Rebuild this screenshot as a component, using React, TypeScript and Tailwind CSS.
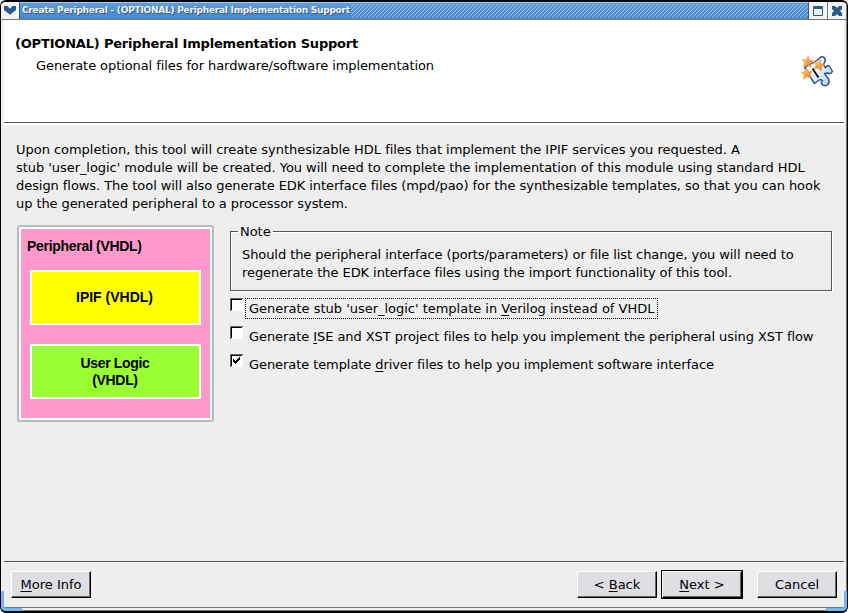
import React from "react";

function Line({ children, className = "" }: { children: React.ReactNode; className?: string }) {
  return <div className={"whitespace-nowrap leading-[18px] " + className}>{children}</div>;
}

function Key({ children }: { children: React.ReactNode }) {
  return <span className="underline decoration-1 underline-offset-2">{children}</span>;
}

function Button({ children, primary = false, className = "" }: { children: React.ReactNode; primary?: boolean; className?: string }) {
  return (
    <div className={primary ? "border border-black " + className : className}>
      <button className="block h-[27px] w-[80px] border-t border-r border-b border-l border-t-white border-r-black border-b-black border-l-white bg-[#dedee3] p-0 text-center leading-[25px] shadow-[inset_-1px_-1px_0_#666]">
        {children}
      </button>
    </div>
  );
}

function Check({ checked = false, focused = false, children, className }: { checked?: boolean; focused?: boolean; children: React.ReactNode; className: string }) {
  return (
    <label className="flex h-[28px] items-start">
      <span className="h-[13px] w-[13px] shrink-0 border-t border-l border-[#666] bg-white">
        <span className="block h-[11px] w-[11px] border-t border-l border-black">
          {checked && (
            <svg className="block" width="9" height="9" viewBox="0 0 9 9" shapeRendering="crispEdges">
              <path d="M1 3h1v3h-1zM2 4h1v3h-1zM3 5h1v3h-1zM4 4h1v3h-1zM5 3h1v3h-1zM6 2h1v3h-1zM7 1h1v3h-1z" fill="#000" />
            </svg>
          )}
        </span>
      </span>
      <span className={"ml-[2px] h-[21px] border border-dotted pl-[3px] leading-[20px] whitespace-nowrap " + (focused ? "border-black " : "border-transparent ") + className}>{children}</span>
    </label>
  );
}

const star = "M0-5.8 1.7-2 5.8-1.7 2.8 1.2 3.8 5.4 0 3.2-3.8 5.4-2.8 1.2-5.8-1.7-1.7-2z";

function WizardIcon() {
  return (
    <svg width="34" height="34" viewBox="0 0 34 34">
      <defs>
        <linearGradient id="piece" x1="0" y1="0" x2="1" y2="1">
          <stop stopColor="#fff" />
          <stop offset=".4" stopColor="#f0f6fb" />
          <stop offset="1" stopColor="#a8d4ea" />
        </linearGradient>
        <linearGradient id="gold" x1="0" y1="0" x2="1" y2="1">
          <stop stopColor="#ffd590" />
          <stop offset=".5" stopColor="#fba544" />
          <stop offset="1" stopColor="#dd661b" />
        </linearGradient>
      </defs>
      <path d="M4.500 13.500 17 6.500 19 4.500Q22 1.500 24 3.500Q26.500 6 24.500 8.500L23.500 10.500 25.500 14Q26 12 29 11.500L32.500 17.500Q31 20.500 27.500 19L24.500 19.500 28.500 25Q30 27.500 28 30.500Q24.500 33 22 30.500Q20.500 29 22.500 26.500Q20.500 25 18.500 26.500L14.500 29.500 8.500 20.500z" fill="url(#piece)" stroke="#2e4ba5" strokeWidth="1.4" strokeLinejoin="round" />
      <path d="m12.500 14.500 6 9" stroke="#000" strokeWidth="1.7" />
      <g fill="url(#gold)" stroke="#ef933d" strokeWidth=".4">
        <path d={star} transform="translate(7.500 7.800) rotate(6)" />
        <path d={star} transform="translate(19 11) rotate(14)" />
        <path d={star} transform="translate(6.800 19.500) rotate(-4)" />
      </g>
    </svg>
  );
}

export default function App() {
  return (
    <div className="relative flex h-[613px] w-[848px] flex-col overflow-hidden rounded-[6px] border-t-2 border-r border-b-2 border-l border-black bg-[#eee] font-['DejaVu_Sans',sans-serif] text-[13px] text-black shadow-[inset_-1px_0_0_#777]">
      <header className="mr-[1px] flex h-[18px] shrink-0 border-b border-[#777]">
        <div className="flex w-[18px] shrink-0 items-center justify-center bg-[#f3f3f3]">
          <svg className="block shrink-0" width="12" height="9" viewBox="0 0 12 9"><path d="M0 0H3.500L6 2.800 8.500 0H12V4L6 8.800 0 4z" fill="#285890" /></svg>
        </div>
        <div className="flex min-w-0 flex-1 border-t border-r border-l border-t-[#9acbff] border-r-[#315b8d] border-l-[#315b8d] bg-linear-to-b from-[#639bd5] to-[#4387d0]">
          <div className="w-[331px] shrink-0 pl-[2px] text-[9px] font-bold leading-[15px] tracking-[-0.235px] whitespace-nowrap text-[#f2f2f2] [text-shadow:1px_1px_0_#315b8d]">Create Peripheral - (OPTIONAL) Peripheral Implementation Support</div>
          <svg className="block h-[16px] min-w-0 flex-1">
            <defs>
              <pattern id="hatch" width="4" height="4" patternUnits="userSpaceOnUse">
                <path d="M-1 5 5-1M-1 1 1-1M3 5 5 3" stroke="#b4d0ee" strokeWidth=".8" />
              </pattern>
            </defs>
            <rect width="100%" height="14" y="1" fill="url(#hatch)" />
          </svg>
        </div>
        <div className="flex w-[18px] items-center justify-center bg-[#f3f3f3]">
          <svg className="block" width="10" height="10" viewBox="0 0 10 10"><rect width="10" height="10" rx="1" fill="#285890" /><path d="M1 3h8v6H1z" fill="#eee" /></svg>
        </div>
        <div className="flex w-[19px] items-center justify-center border-l border-[#777] bg-[#f3f3f3]">
          <svg className="block shrink-0" width="12" height="12" viewBox="0 0 12 12"><path d="M1 1h3l2 2 2-2h3v3L9 6l2 2v3H8L6 9l-2 2H1V8l2-2-2-2z" fill="#285890" /></svg>
        </div>
      </header>

      <section className="ml-[3px] mr-[3px] flex h-[103px] shrink-0 justify-between border-b border-[#555] bg-white pt-[15px] pl-[11px]">
        <div>
          <Line className="font-bold tracking-[-0.19px]">(OPTIONAL) Peripheral Implementation Support</Line>
          <Line className="mt-[4px] pl-[21px] tracking-[-0.083px]">Generate optional files for hardware/software implementation</Line>
        </div>
        <div className="mt-[19px] mr-[10px]"><WizardIcon /></div>
      </section>

      <main className="mx-[3px] h-[438px] shrink-0 border-t-2 border-white px-[12px] pt-[16px]">
        <Line className="tracking-[-0.03px]">Upon completion, this tool will create synthesizable HDL files that implement the IPIF services you requested. A</Line>
        <Line className="tracking-[-0.05px]">stub 'user_logic' module will be created. You will need to complete the implementation of this module using standard HDL</Line>
        <Line className="tracking-[-0.06px]">design flows. The tool will also generate EDK interface files (mpd/pao) for the synthesizable templates, so that you can hook</Line>
        <Line className="tracking-[-0.08px]">up the generated peripheral to a processor system.</Line>
        <div className="mt-[12px] flex">
          <div className="ml-[1px] h-[197px] w-[197px] shrink-0 rounded-[3px] border-2 border-[#b9b9b9] bg-white p-[2px] font-['Liberation_Sans',Arial,sans-serif] text-[14px] font-bold">
            <div className="h-[189px] bg-[#ff99cc] px-[9px] pt-[9px]">
              <div className="-ml-[3px] h-[32px] leading-[16px] tracking-[-0.3px] whitespace-nowrap">Peripheral (VHDL)</div>
              <div className="flex h-[55px] w-[171px] items-center justify-center border-2 border-white bg-[#ffff00] pr-[2px] leading-[17px]">IPIF (VHDL)</div>
              <div className="mt-[19px] flex h-[55px] w-[171px] items-center justify-center border-2 border-white bg-[#99ff33] pr-[1px] text-center leading-[17px] tracking-[-0.35px]"><div>User Logic<br />(VHDL)</div></div>
            </div>
          </div>
          <div className="ml-[16px] w-[602px]">
            <fieldset className="-mt-[3px] h-[69px] border border-[#555] pl-[11px] shadow-[1px_1px_0_#fff,inset_1px_1px_0_#fff]">
              <legend className="-ml-[4px] h-[18px] bg-[#eee] px-[2px] leading-[20px] tracking-[-0.05px]">Note</legend>
              <Line className="mt-[6px] tracking-[-0.078px]">Should the peripheral interface (ports/parameters) or file list change, you will need to</Line>
              <Line className="tracking-[-0.07px]">regenerate the EDK interface files using the import functionality of this tool.</Line>
            </fieldset>
            <div className="mt-[7px]">
              <Check focused className="w-[413px] tracking-[-0.015px]">Generate stub 'user_logic' template in <Key>V</Key>erilog instead of VHDL</Check>
              <Check className="w-[580px] tracking-[-0.068px]">Generate <Key>I</Key>SE and XST project files to help you implement the peripheral using XST flow</Check>
              <Check checked className="w-[480px] tracking-[-0.078px]">Generate template <Key>d</Key>river files to help you implement software interface</Check>
            </div>
          </div>
        </div>
      </main>

      <footer className="mx-[3px] h-[46px] shrink-0 border-t border-[#555]">
        <div className="flex items-start border-t border-white px-[7px] pt-[8px]">
          <Button>
            <Key>M</Key>ore Info
          </Button>
          <Button className="ml-auto">
            &lt; <Key>B</Key>ack
          </Button>
          <Button primary className="-mt-[1px] mr-[14px] ml-[4px]">
            <Key>N</Key>ext &gt;
          </Button>
          <Button>Cancel</Button>
        </div>
      </footer>
      <div className="mx-[3px] h-[4px] border-t border-b border-[#777]" />
      <div className="absolute bottom-0 left-0 h-[20px] w-[21px] rounded-bl-[5px] border-b-[3px] border-l-[3px] border-[#6fb5f8]" />
      <div className="absolute right-0 bottom-0 h-[20px] w-[21px] rounded-br-[5px] border-r-[3px] border-b-[3px] border-[#6fb5f8]" />
    </div>
  );
}
